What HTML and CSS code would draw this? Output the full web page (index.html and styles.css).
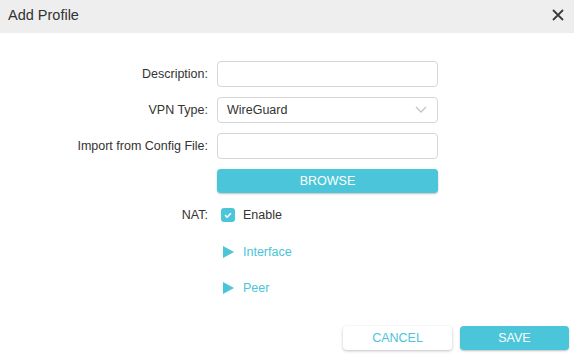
FILE: index.html
```html
<!DOCTYPE html>
<html>
<head>
<meta charset="utf-8">
<title>Add Profile</title>
<link rel="stylesheet" href="styles.css">
</head>
<body>
<div class="dialog">
    <div class="dialog-header">
        <span class="dialog-title">Add Profile</span>
        <span class="close-btn">
            <svg viewBox="0 0 12 12" width="12" height="12">
                <path d="M1 1L11 11M11 1L1 11" stroke="#3c3c3c" stroke-width="1.8" fill="none"/>
            </svg>
        </span>
    </div>

    <div class="form">
        <div class="row">
            <label class="label">Description:</label>
            <div class="field"><input class="text-input" type="text"></div>
        </div>
        <div class="row">
            <label class="label">VPN Type:</label>
            <div class="field">
                <div class="select">
                    <span>WireGuard</span>
                    <svg viewBox="0 0 12 8" width="12" height="8">
                        <path d="M1 1L6 6L11 1" stroke="#c4c4c4" stroke-width="1.3" fill="none"/>
                    </svg>
                </div>
            </div>
        </div>
        <div class="row">
            <label class="label">Import from Config File:</label>
            <div class="field"><input class="text-input" type="text"></div>
        </div>
        <div class="row">
            <span class="label"></span>
            <div class="field"><button class="btn btn-primary btn-browse">BROWSE</button></div>
        </div>
        <div class="row row-check">
            <label class="label">NAT:</label>
            <div class="field check-field">
                <span class="checkbox">
                    <svg viewBox="0 0 14 14" width="14" height="14">
                        <path d="M4 7.2L6.1 9.2L10 5.2" stroke="#fff" stroke-width="1.6" fill="none"/>
                    </svg>
                </span>
                <span class="check-text">Enable</span>
            </div>
        </div>
        <div class="row row-section">
            <span class="label"></span>
            <div class="field section"><span class="triangle"></span>Interface</div>
        </div>
        <div class="row row-section">
            <span class="label"></span>
            <div class="field section"><span class="triangle"></span>Peer</div>
        </div>
    </div>

    <div class="dialog-footer">
        <button class="btn btn-cancel">CANCEL</button>
        <button class="btn btn-primary">SAVE</button>
    </div>
</div>
</body>
</html>
```

FILE: styles.css
```css
body {
    margin: 0;
    padding: 0;
    font-family: "Liberation Sans", Arial, sans-serif;
    background: #fff;
    color: #333;
}
.dialog {
    width: 574px;
    height: 358px;
    position: relative;
}
.dialog-header {
    height: 33px;
    background-color: #eeeeee;
    display: flex;
    align-items: center;
    justify-content: space-between;
    padding: 0 10px 0 8px;
}
.dialog-title {
    font-size: 14.5px;
    color: #333;
    margin-top: -3px;
}
.close-btn {
    display: flex;
    margin-top: -3px;
}
.form {
    padding-top: 28px;
}
.row {
    display: flex;
    align-items: center;
    height: 26px;
    margin-bottom: 10px;
}
.label {
    width: 208px;
    padding-right: 9px;
    text-align: right;
    font-size: 12.5px;
    color: #333;
    flex-shrink: 0;
}
.field {
    width: 221px;
}
.text-input,
.select {
    width: 221px;
    height: 26px;
    box-sizing: border-box;
    border: 1px solid #d6d6d6;
    border-radius: 4px;
    margin: 0;
    padding: 0 8px;
    font-family: inherit;
    font-size: 12.5px;
    background: #fff;
}
.select {
    display: flex;
    align-items: center;
    justify-content: space-between;
    padding: 0 10px 0 9px;
    color: #333;
}
.btn {
    font-family: inherit;
    font-size: 12.5px;
    border: none;
    border-radius: 4px;
    height: 24px;
    padding: 0;
    cursor: pointer;
}
.btn-primary {
    background-color: #4ac5d9;
    color: #fff;
    box-shadow: 0 1px 2px rgba(0, 0, 0, 0.25);
}
.btn-browse {
    width: 221px;
    margin-top: -2px;
}
.row-check {
    height: 20px;
    margin-bottom: 17px;
}
.check-field {
    display: flex;
    align-items: center;
}
.checkbox {
    width: 14px;
    height: 14px;
    border-radius: 3px;
    background-color: #4ac5d9;
    margin-left: 4px;
    display: flex;
}
.check-text {
    font-size: 12.5px;
    margin-left: 8px;
    color: #333;
}
.row-section {
    height: 20px;
    margin-bottom: 16px;
}
.section {
    display: flex;
    align-items: center;
    font-size: 12.5px;
    color: #4ac5d9;
}
.triangle {
    width: 0;
    height: 0;
    border-top: 6px solid transparent;
    border-bottom: 6px solid transparent;
    border-left: 11px solid #4ac5d9;
    margin-left: 6px;
    margin-right: 9px;
}
.dialog-footer {
    position: absolute;
    right: 5px;
    bottom: 8px;
    display: flex;
    gap: 8px;
}
.dialog-footer .btn {
    width: 109px;
    height: 24px;
}
.btn-cancel {
    background: #fff;
    color: #4ac5d9;
    box-shadow: 0 1px 3px rgba(0, 0, 0, 0.25);
}
```
